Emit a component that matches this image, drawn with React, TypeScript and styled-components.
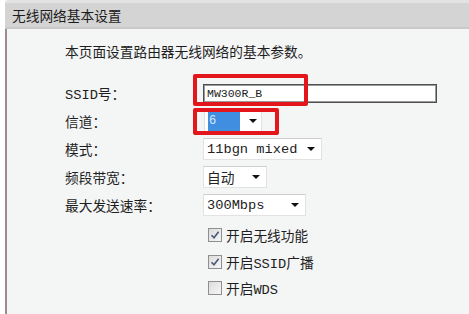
import React from "react";
import styled, { createGlobalStyle } from "styled-components";

const Global = createGlobalStyle`
  html, body { margin: 0; padding: 0; background: #ffffff; }
  body { width: 469px; height: 314px; overflow: hidden; }
`;

const CJK = `"Noto Sans CJK SC", "Noto Sans", sans-serif`;
const MONO = `"Liberation Mono", "Noto Sans CJK SC", monospace`;

const Panel = styled.div`
  margin-left: 5px;
  height: 314px;
  display: flex;
  flex-direction: column;
`;

const Header = styled.div`
  height: 24px;
  background: #d4d4d4;
  border-top: 3px solid #e3e3e3;
  border-bottom: 2px solid #c9c9c9;
  border-top-left-radius: 3px;
  display: flex;
  align-items: center;
  padding-left: 7px;
  font-family: ${CJK};
  font-size: 13.7px;
  color: #1c1c1c;
`;

const Body = styled.div`
  flex: 1;
  background: #f4f5f5;
  border-left: 2px solid #a08a8c;
  padding: 12px 0 0 58px;
  display: flex;
  flex-direction: column;
`;

const Intro = styled.div`
  height: 20px;
  line-height: 20px;
  font-family: ${CJK};
  font-size: 13.7px;
  color: #1e1e1e;
`;

const Form = styled.div`
  margin-top: 18px;
  display: flex;
  flex-direction: column;
`;

const Row = styled.div`
  height: 28px;
  display: flex;
  align-items: center;
`;

const Label = styled.div`
  width: 138px;
  font-family: ${MONO};
  font-size: 13.7px;
  color: #1e1e1e;
`;

const Cell = styled.div`
  position: relative;
  display: flex;
  align-items: center;
  height: 100%;
`;

const Mark = styled.div<{ $top: number; $w: number; $h: number }>`
  position: absolute;
  left: -10px;
  top: ${(p) => p.$top}px;
  width: ${(p) => p.$w}px;
  height: ${(p) => p.$h}px;
  box-sizing: border-box;
  border: 4px solid #e3161c;
  border-radius: 2px;
  pointer-events: none;
`;

const TextInput = styled.div`
  width: 234px;
  height: 19px;
  box-sizing: border-box;
  background: #ffffff;
  border: 1px solid #4f4f4f;
  box-shadow: inset 0 0 0 1px #9a9a9a;
  display: flex;
  align-items: center;
  padding-left: 3px;
  font-family: ${MONO};
  font-size: 11.5px;
  color: #222;
`;

const Select = styled.div<{ $w: number; $pr?: number }>`
  width: ${(p) => p.$w}px;
  height: 22px;
  box-sizing: border-box;
  background: #ffffff;
  border: 1px solid #e2e2e2;
  border-top-color: #cfcfcf;
  display: flex;
  align-items: center;
  justify-content: space-between;
  padding: 0 ${(p) => p.$pr ?? 6}px 0 3px;
  font-family: ${MONO};
  font-size: 13.7px;
  color: #222;
`;

const Selected = styled.span`
  width: 32px;
  height: 19px;
  background: #3f8ee0;
  color: #dde9fb;
  display: flex;
  align-items: center;
  padding-left: 1px;
  box-sizing: border-box;
  font-size: 12px;
`;

const Arrow = styled.span`
  width: 0;
  height: 0;
  border-left: 4px solid transparent;
  border-right: 4px solid transparent;
  border-top: 4px solid #111;
`;

const Checks = styled.div`
  margin-top: 3px;
  padding-left: 143px;
  display: flex;
  flex-direction: column;
`;

const CheckRow = styled.div`
  height: 26.5px;
  display: flex;
  align-items: center;
  gap: 4px;
  font-family: ${MONO};
  font-size: 13.7px;
  color: #1e1e1e;
`;

const Box = styled.span`
  width: 14px;
  height: 14px;
  box-sizing: border-box;
  border: 1px solid #8f8f8f;
  background: linear-gradient(135deg, #dcdcdc, #f6f6f6);
  display: flex;
  align-items: center;
  justify-content: center;
`;

const Check = ({ on, children }: { on: boolean; children: React.ReactNode }) => (
  <CheckRow>
    <Box>
      {on && (
        <svg width="10" height="10" viewBox="0 0 10 10">
          <path d="M1.5 5.2 L4 7.8 L8.6 1.8" fill="none" stroke="#4b5878" strokeWidth="1.6" />
        </svg>
      )}
    </Box>
    <span>{children}</span>
  </CheckRow>
);

export default function App() {
  return (
    <>
      <Global />
      <Panel>
        <Header>无线网络基本设置</Header>
        <Body>
          <Intro>本页面设置路由器无线网络的基本参数。</Intro>
          <Form>
            <Row>
              <Label>SSID号：</Label>
              <Cell>
                <TextInput>MW300R_B</TextInput>
                <Mark $top={-5} $w={115} $h={32} />
              </Cell>
            </Row>
            <Row>
              <Label>信道：</Label>
              <Cell>
                <Select $w={58} $pr={4} style={{ marginLeft: 1 }}>
                  <Selected>6</Selected>
                  <Arrow />
                </Select>
                <Mark $top={1} $w={86} $h={27} />
              </Cell>
            </Row>
            <Row>
              <Label>模式：</Label>
              <Cell>
                <Select $w={119}>
                  <span>11bgn mixed</span>
                  <Arrow />
                </Select>
              </Cell>
            </Row>
            <Row>
              <Label>频段带宽：</Label>
              <Cell>
                <Select $w={64}>
                  <span style={{ fontFamily: CJK }}>自动</span>
                  <Arrow />
                </Select>
              </Cell>
            </Row>
            <Row>
              <Label>最大发送速率：</Label>
              <Cell>
                <Select $w={103}>
                  <span>300Mbps</span>
                  <Arrow />
                </Select>
              </Cell>
            </Row>
          </Form>
          <Checks>
            <Check on>开启无线功能</Check>
            <Check on>开启SSID广播</Check>
            <Check on={false}>开启WDS</Check>
          </Checks>
        </Body>
      </Panel>
    </>
  );
}
